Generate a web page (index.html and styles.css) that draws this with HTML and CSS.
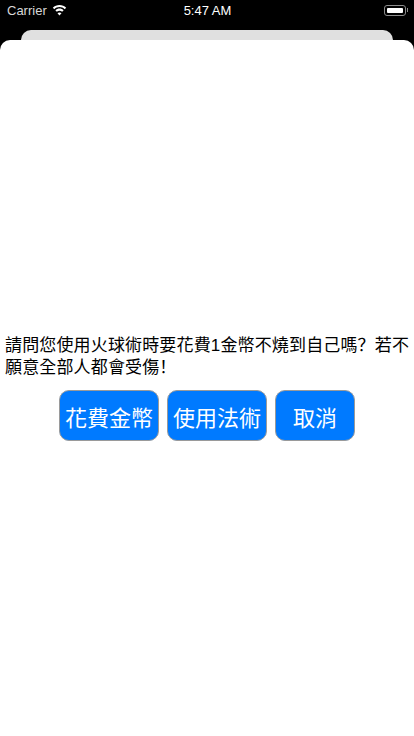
FILE: index.html
```html
<!DOCTYPE html>
<html lang="zh-Hant">
<head>
  <meta charset="UTF-8">
  <meta name="viewport" content="width=device-width, initial-scale=1.0">
  <title>火球術</title>
  <link rel="stylesheet" href="styles.css">
</head>

<body>
  <div class="screen">
    <div class="status-bar">
      <div class="status-left">
        <span class="carrier">Carrier</span>
        <svg class="wifi" viewBox="0 0 16 12" width="15" height="11">
          <path d="M8 2.300c2.200 0 4.200.9 5.700 2.300l1.600-1.700C13.400 1.100 10.800 0 8 0S2.600 1.100.7 2.900l1.600 1.700C3.800 3.200 5.800 2.300 8 2.300z"/>
          <path d="M8 6.300c1.100 0 2.100.4 2.900 1.100l1.600-1.700C11.300 4.600 9.700 3.900 8 3.900s-3.300.7-4.500 1.800l1.600 1.700C5.900 6.700 6.900 6.300 8 6.300z"/>
          <path d="M8 8.100c-.9 0-1.600.3-2.200.9L8 11.500 10.200 9c-.6-.6-1.300-.9-2.200-.9z"/>
        </svg>
      </div>
      <div class="status-time">5:47 AM</div>
      <div class="status-right">
        <div class="battery"><div class="battery-level"></div></div>
        <div class="battery-cap"></div>
      </div>
    </div>

    <div class="back-card"></div>

    <div class="sheet">
      <p class="question">請問您使用火球術時要花費1金幣不燒到自己嗎<span class="punct" lang="zh-Hans">&#xFF1F;</span>若不願意全部人都會受傷<span class="punct" lang="zh-Hans">&#xFF01;</span></p>
      <div class="actions">
        <button class="action action-wide">花費金幣</button>
        <button class="action action-wide">使用法術</button>
        <button class="action action-narrow">取消</button>
      </div>
    </div>
  </div>
</body>
</html>
```

FILE: styles.css
```css
* {
  margin: 0;
  padding: 0;
  box-sizing: border-box;
}

body {
  background-color: #000000;
  font-family: "Liberation Sans", "Noto Sans CJK TC", sans-serif;
  overflow: hidden;
}

.screen {
  display: flex;
  flex-direction: column;
  height: 736px;
}

/* status bar */
.status-bar {
  display: grid;
  grid-template-columns: 1fr auto 1fr;
  align-items: center;
  height: 20px;
  padding: 0 6px 0 7px;
  color: #ffffff;
  font-size: 13px;
  flex-shrink: 0;
}

.status-left {
  display: flex;
  align-items: center;
  gap: 5px;
}

.carrier {
  color: #d8d8d8;
}

.wifi {
  fill: #ffffff;
}

.status-time {
  font-weight: 500;
}

.status-right {
  display: flex;
  align-items: center;
  justify-content: flex-end;
  gap: 1px;
}

.battery {
  width: 22px;
  height: 11px;
  padding: 2px;
  border: 1px solid #8c8c8c;
  border-radius: 3px;
}

.battery-level {
  height: 100%;
  background-color: #ffffff;
  border-radius: 1px;
}

.battery-cap {
  width: 1px;
  height: 4px;
  background-color: #8c8c8c;
}

/* card peeking out behind the sheet */
.back-card {
  height: 10px;
  margin: 10px 21px 0;
  background-color: #e0e0e0;
  border-radius: 10px 10px 0 0;
  flex-shrink: 0;
}

.sheet {
  flex: 1;
  display: flex;
  flex-direction: column;
  justify-content: center;
  gap: 11px;
  background-color: #ffffff;
  border-radius: 10px 10px 0 0;
}

.question {
  padding: 0 4px 0 5px;
  color: #000000;
  font-size: 17px;
  line-height: 22px;
  letter-spacing: 0.15px;
}

/* full-width punctuation sits at the left of its box in this face */
.punct {
  font-family: "Liberation Sans", "Noto Sans CJK SC", sans-serif;
}

.actions {
  display: flex;
  justify-content: center;
  gap: 8px;
}

.action {
  height: 51px;
  background-color: #007aff;
  color: #ffffff;
  border: 1px solid #9a9a9a;
  border-radius: 10px;
  font-family: inherit;
  font-size: 22px;
}

.action-wide {
  width: 100px;
}

.action-narrow {
  width: 80px;
}
```
